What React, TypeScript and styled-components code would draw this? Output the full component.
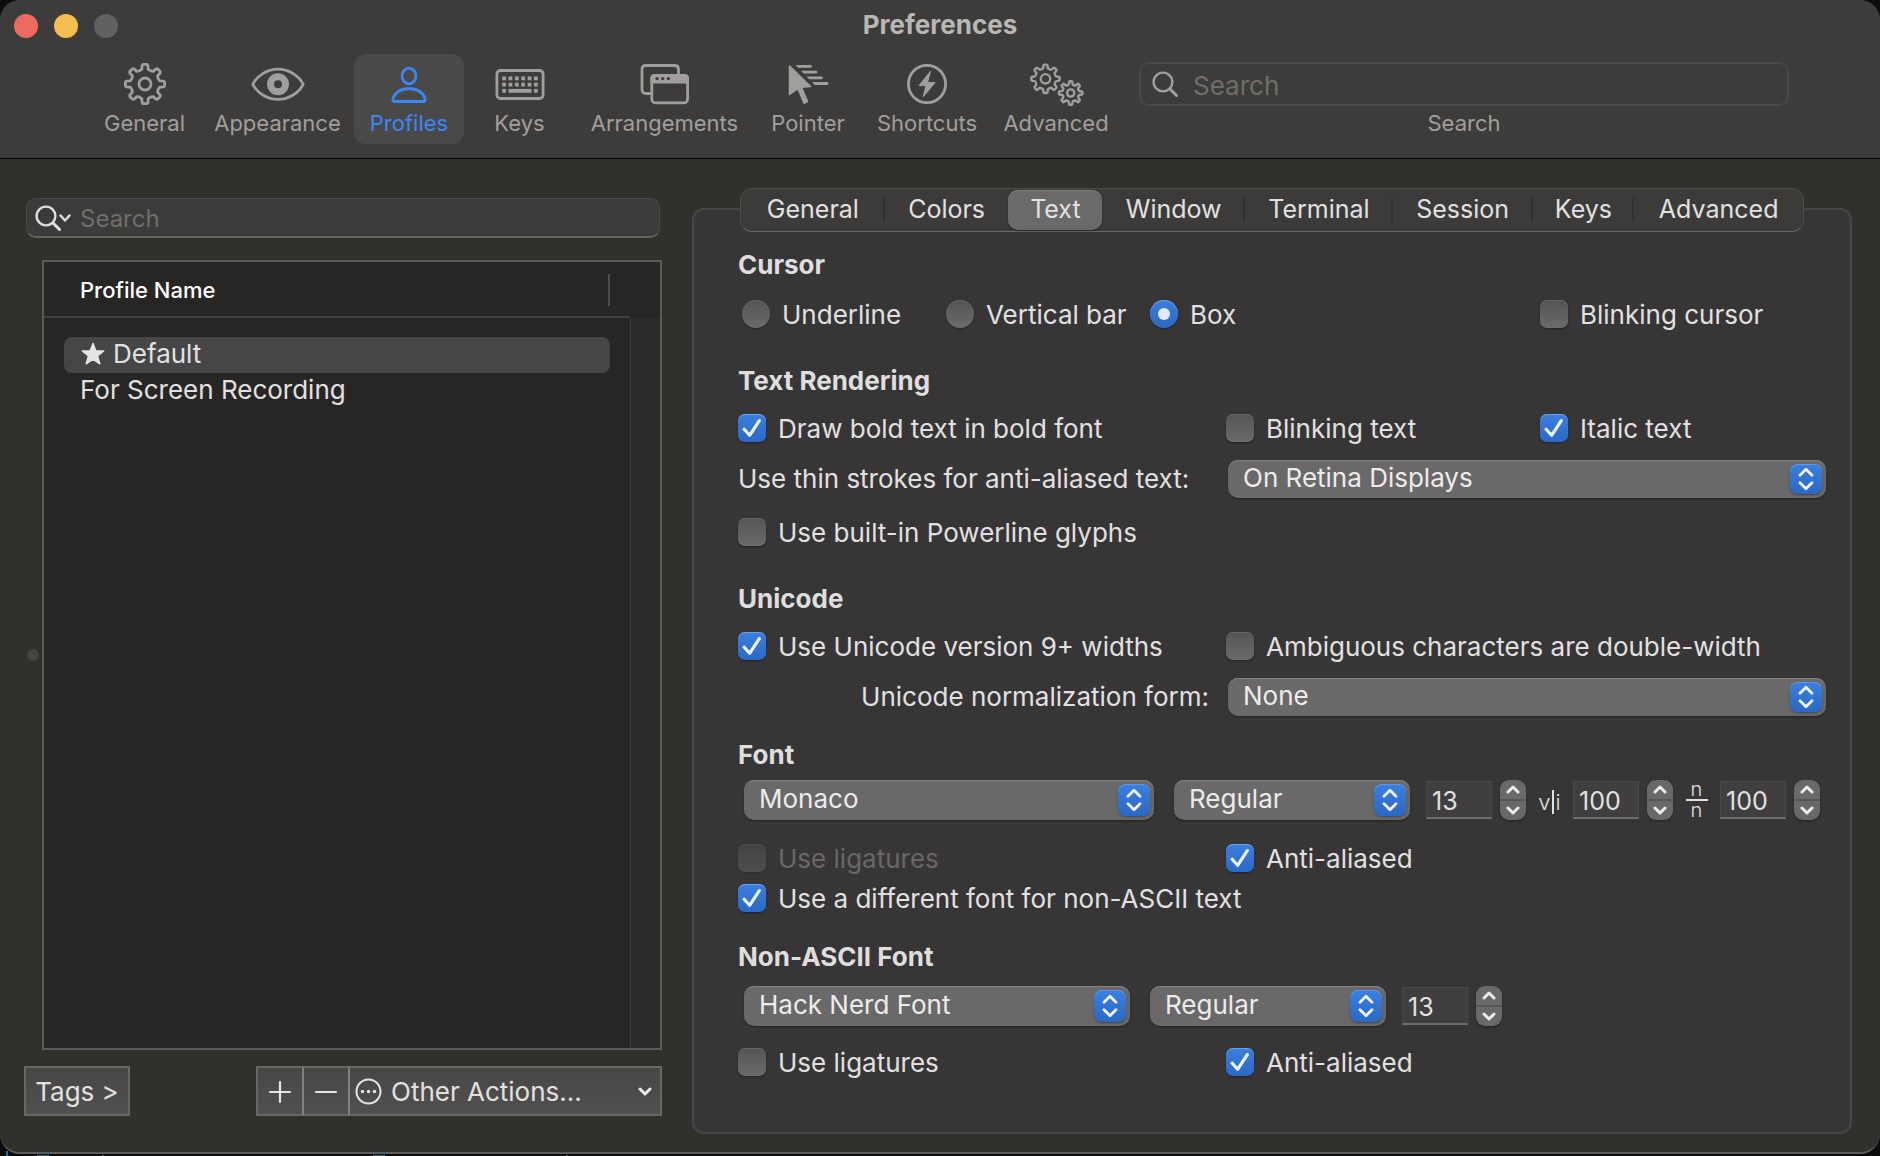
import React, { useState } from 'react';
import styled, { createGlobalStyle, css } from 'styled-components';

const GlobalStyle = createGlobalStyle`
  *, *::before, *::after { box-sizing: border-box; }
  body {
    margin: 0;
    background: #0b0c0e;
    color: #e2e1e1;
    font-family: Inter, "Liberation Sans", sans-serif;
    font-size: 26px;
    line-height: 30px;
  }
  button, input, select { font: inherit; color: inherit; margin: 0; }
  svg { display: block; }
`;

const blueFill = 'linear-gradient(#3a7fe0, #2b69c4)';
const terminalBlue = 'linear-gradient(#2b6a96, #2b6a96)';

const Desktop = styled.div`
  min-height: 100vh;
  padding-bottom: 2px;
  display: flex;
  background:
    ${terminalBlue} 6px 100% / 2px 5px no-repeat,
    ${terminalBlue} 37px 100% / 12px 1px no-repeat,
    ${terminalBlue} 102px 100% / 2px 1px no-repeat,
    ${terminalBlue} 373px 100% / 12px 1px no-repeat,
    ${terminalBlue} 566px 100% / 2px 1px no-repeat;
`;

const Window = styled.div`
  flex: 1;
  display: flex;
  flex-direction: column;
  background: #31302d;
  border-radius: 20px;
  border-bottom: 2px solid #5c5b59;
  overflow: hidden;
`;

const Header = styled.header`
  height: 159px;
  background: #3e3c3a;
  border-bottom: 1px solid #000;
`;

const TitleBar = styled.div`
  position: relative;
  height: 50px;
  display: flex;
  align-items: center;
  justify-content: center;
`;

const WindowButtons = styled.div`
  position: absolute;
  left: 14px;
  top: 14px;
  display: flex;
  gap: 16px;
`;

const WindowButton = styled.button<{ $color: string }>`
  width: 24px;
  height: 24px;
  padding: 0;
  border: 0;
  border-radius: 50%;
  background: ${(p) => p.$color};
`;

const Title = styled.h1`
  margin: 0;
  font-size: 26px;
  line-height: 30px;
  font-weight: 700;
  color: #b9b7b5;
`;

const Toolbar = styled.nav`
  display: grid;
  grid-template-columns: 113px 153px 110px 111px 179px 108px 130px 128px minmax(200px, 1fr);
  padding: 4px 91px 0 88px;
`;

const ToolButton = styled.button<{ $active?: boolean }>`
  height: 90px;
  padding: 8px 0 0;
  border: 0;
  border-radius: 12px;
  background: ${(p) => (p.$active ? '#4b4947' : 'transparent')};
  color: ${(p) => (p.$active ? '#3a88f7' : '#a19f9d')};
  display: flex;
  flex-direction: column;
  align-items: center;
  font-size: 22px;
  line-height: 26px;
  white-space: nowrap;
`;

const ToolSearch = styled.div`
  margin-left: 19px;
  padding-top: 8px;
  display: flex;
  flex-direction: column;
  font-size: 22px;
  line-height: 26px;
  text-align: center;
  color: #a19f9d;
`;

const ToolSearchBox = styled.div`
  height: 44px;
  margin-bottom: 4px;
  padding: 0 11px;
  display: flex;
  align-items: center;
  gap: 14px;
  border: 2px solid #4b4947;
  border-radius: 10px;
  font-size: 26px;
`;

const PlainInput = styled.input`
  flex: 1;
  min-width: 0;
  height: 32px;
  padding: 2px 0 0;
  border: 0;
  outline: 0;
  background: transparent;
  &::placeholder { color: #706e6c; opacity: 1; }
`;

const Body = styled.main`
  flex: 1;
  display: grid;
  grid-template-columns: 660px 1fr;
  column-gap: 32px;
  padding-right: 28px;
`;

const Sidebar = styled.aside`
  padding: 39px 0 36px 24px;
  display: flex;
  flex-direction: column;
`;

const SidebarSearch = styled.div`
  height: 40px;
  margin: 0 0 22px 2px;
  padding: 0 8px;
  display: flex;
  align-items: center;
  gap: 9px;
  border: 1px solid #4a4947;
  border-bottom: 2px solid #666462;
  border-radius: 10px;
  background: #3c3b39;
  font-size: 24px;
`;

const ListArea = styled.div`
  flex: 1;
  margin-right: -2px;
  display: flex;
  align-items: center;
`;

const SplitHandle = styled.div`
  width: 12px;
  height: 12px;
  margin: 0 3px;
  border-radius: 50%;
  background: #454441;
`;

const ListFrame = styled.div`
  flex: 1;
  align-self: stretch;
  display: flex;
  border: 2px solid #595958;
  background: #272624;
`;

const ProfileTable = styled.table`
  flex: 1;
  align-self: flex-start;
  border-collapse: collapse;
  th {
    height: 55px;
    padding: 2px 20px 0 36px;
    border-bottom: 2px solid #424140;
    text-align: left;
    font-size: 22px;
    font-weight: 500;
    color: #fff;
  }
  td { padding: 0 20px; }
  tbody tr:first-child td { padding-top: 19px; }
`;

const HeadCell = styled.div`
  height: 32px;
  display: flex;
  align-items: center;
  justify-content: space-between;
  border-right: 2px solid #4d4c4b;
`;

const ProfileCell = styled.div<{ $selected?: boolean }>`
  height: 36px;
  padding: 0 16px 2px;
  display: flex;
  align-items: center;
  gap: 7px;
  border-radius: 8px;
  background: ${(p) => (p.$selected ? '#464646' : 'transparent')};
`;

const Scroller = styled.div`
  width: 30px;
  margin-top: 56px;
  border-left: 1px solid #3b3b3b;
  background: #2b2b2b;
`;

const SidebarFooter = styled.div`
  margin: 16px -2px 0 0;
  display: flex;
  justify-content: space-between;
`;

const SquareButton = styled.button<{ $width: number }>`
  width: ${(p) => p.$width}px;
  height: 50px;
  padding: 1px 4px 0;
  display: flex;
  align-items: center;
  justify-content: center;
  border: 2px solid #686766;
  background: linear-gradient(#484745, #52504e);
  white-space: nowrap;
`;

const ButtonGroup = styled.div`
  display: flex;
  ${SquareButton} + ${SquareButton} { border-left-color: #83817f; }
  ${SquareButton}:not(:last-child) { border-right: 0; }
  ${SquareButton}:last-child { justify-content: flex-start; gap: 9px; padding: 1px 8px 0 5px; }
  ${SquareButton}:last-child > :last-child { margin-left: auto; }
`;

const Details = styled.section`
  padding: 29px 0 18px;
  display: flex;
  flex-direction: column;
`;

const Tabs = styled.div`
  position: relative;
  height: 44px;
  margin: 0 48px -24px 48px;
  padding: 1px 0;
  display: grid;
  grid-template-columns: 144fr 124fr 94fr 143fr 148fr 140fr 102fr 169fr;
  border: 1px solid #4e4d4b;
  border-bottom-color: #6c6a68;
  border-radius: 12px;
  background: #3c3b39;
  font-size: 25px;
`;

const Tab = styled.button<{ $active?: boolean; $divider?: boolean }>`
  position: relative;
  padding: 0 0 2px;
  border: 0;
  border-radius: 10px;
  background: transparent;
  white-space: nowrap;
  ${(p) => p.$active && css`
    background: #6b6a69;
    box-shadow: 0 1px 2px rgba(0, 0, 0, 0.4), inset 0 1px 0 #7e7d7c;
  `}
  ${(p) => p.$divider && css`
    &::after {
      content: '';
      position: absolute;
      right: 0;
      top: 8px;
      bottom: 8px;
      width: 2px;
      background: #323130;
    }
  `}
`;

const Panel = styled.div`
  flex: 1;
  padding: 40px 24px 20px 44px;
  border: 2px solid #484645;
  border-radius: 12px;
  background: #383536;
`;

const Heading = styled.h2<{ $top?: number }>`
  margin: ${(p) => p.$top ?? 0}px 0 0;
  font-size: 26px;
  line-height: 30px;
  font-weight: 700;
  color: #dfdedf;
`;

const Row = styled.div<{ $top: number }>`
  margin-top: ${(p) => p.$top}px;
  display: grid;
  grid-template-columns: minmax(0, 488fr) minmax(0, 314fr) minmax(0, 286fr);
  align-items: center;
  white-space: nowrap;
`;

const RadioGroup = styled.div`
  grid-column: span 2;
  padding-left: 4px;
  display: grid;
  grid-template-columns: 204px 204px 1fr;
`;

const Wide = styled.div`
  grid-column: span 2;
  padding-left: 2px;
  display: grid;
`;

const FieldLabel = styled.label<{ $right?: boolean }>`
  padding: 0 17px 0 0;
  text-align: ${(p) => (p.$right ? 'right' : 'left')};
`;

const FontRow = styled.div<{ $top: number }>`
  margin-top: ${(p) => p.$top}px;
  padding-left: 6px;
  display: flex;
  align-items: center;
`;

const Option = styled.label<{ $disabled?: boolean }>`
  height: 28px;
  display: flex;
  align-items: center;
  gap: 12px;
  color: ${(p) => (p.$disabled ? '#696768' : 'inherit')};
`;

const OptionText = styled.span`
  padding-top: 2px;
`;

const Mark = styled.span<{ $disabled?: boolean }>`
  display: grid;
  width: 28px;
  height: 28px;
  opacity: ${(p) => (p.$disabled ? 0.45 : 1)};
  > * { grid-area: 1 / 1; place-self: center; }
  > svg { pointer-events: none; }
`;

const Tick = styled.input<{ $round?: boolean }>`
  appearance: none;
  width: 28px;
  height: 28px;
  border-radius: ${(p) => (p.$round ? '50%' : '7px')};
  background: linear-gradient(#555354, #6c6a6b);
  box-shadow: 0 1px 2px rgba(0, 0, 0, 0.4), inset 0 1px 0 rgba(255, 255, 255, 0.12);
  &:checked {
    background: ${blueFill};
    box-shadow: 0 1px 2px rgba(0, 0, 0, 0.4), inset 0 1px 0 #6ba1ec;
  }
`;

const SelectWrap = styled.div<{ $width?: number; $tall?: boolean }>`
  position: relative;
  width: ${(p) => (p.$width ? `${p.$width}px` : 'auto')};
  height: ${(p) => (p.$tall ? 40 : 38)}px;
`;

const NativeSelect = styled.select`
  appearance: none;
  display: block;
  width: 100%;
  height: 100%;
  padding: 0 44px 2px 15px;
  border: 0;
  border-radius: 10px;
  background: #6a6869;
  color: #ececec;
  box-shadow: 0 1px 2px rgba(0, 0, 0, 0.4), inset 0 1px 0 #858384;
`;

const SelectBadge = styled.span`
  position: absolute;
  top: 4px;
  right: 4px;
  bottom: 4px;
  width: 32px;
  display: grid;
  place-items: center;
  border-radius: 8px;
  background: ${blueFill};
  box-shadow: 0 1px 2px rgba(0, 0, 0, 0.35), inset 0 1px 0 #5c98ec;
  pointer-events: none;
`;

const NumberInput = styled.input`
  width: 66px;
  height: 38px;
  padding: 2px 5px 0;
  border: 1px solid #4b4a4b;
  border-bottom: 2px solid #6f6e6f;
  border-radius: 0;
  outline: 0;
  background: #403e3f;
  font-size: 25px;
`;

const Stepper = styled.div`
  width: 26px;
  height: 40px;
  margin-left: 8px;
  display: flex;
  flex-direction: column;
  border-radius: 9px;
  overflow: hidden;
  background: #6a6869;
  box-shadow: 0 1px 2px rgba(0, 0, 0, 0.4);
`;

const StepButton = styled.button`
  flex: 1;
  padding: 0;
  border: 0;
  background: transparent;
  display: grid;
  place-items: center;
  & + & { border-top: 2px solid #575556; }
`;

const Gap = styled.div<{ $size: number }>`
  flex: 0 0 ${(p) => p.$size}px;
`;

const SpacingMark = styled.span`
  width: 47px;
  display: grid;
  place-items: center;
`;

const HorizontalMark = styled.span`
  padding-top: 4px;
  display: flex;
  align-items: center;
  font-size: 22px;
  line-height: 24px;
  font-weight: 300;
  i { width: 2px; height: 24px; margin: 0 2px 0 1px; background: currentColor; }
`;

const VerticalMark = styled.span`
  display: grid;
  justify-items: center;
  font-size: 20px;
  line-height: 19px;
  font-weight: 300;
  i { width: 22px; height: 2px; background: currentColor; }
`;

function gearPath(cx: number, cy: number, outer: number, inner: number, teeth = 8) {
  const pts: string[] = [];
  const step = (Math.PI * 2) / teeth;
  const at = (r: number, a: number) =>
    `${(cx + r * Math.sin(a)).toFixed(2)} ${(cy - r * Math.cos(a)).toFixed(2)}`;
  for (let i = 0; i < teeth; i++) {
    const a = i * step;
    pts.push(`${i ? 'L' : 'M'}${at(inner, a - step * 0.27)}`);
    pts.push(`L${at(outer - 1, a - step * 0.2)}`);
    pts.push(`Q${at(outer, a - step * 0.18)} ${at(outer, a - step * 0.1)}`);
    pts.push(`L${at(outer, a + step * 0.1)}`);
    pts.push(`Q${at(outer, a + step * 0.18)} ${at(outer - 1, a + step * 0.2)}`);
    pts.push(`L${at(inner, a + step * 0.27)}`);
    pts.push(`Q${at(inner - 1.4, a + step * 0.5)} ${at(inner, a + step * 0.73)}`);
  }
  return pts.join('') + 'Z';
}

const iconProps = {
  height: 48,
  fill: 'none',
  stroke: 'currentColor',
  strokeWidth: 2.8,
  strokeLinejoin: 'round' as const,
  strokeLinecap: 'round' as const,
  'aria-hidden': true,
};

const GearIcon = () => (
  <svg {...iconProps} width="44" viewBox="0 0 44 48">
    <path d={gearPath(22, 22, 19.7, 15)} />
    <circle cx="22" cy="22" r="6" />
  </svg>
);

const EyeIcon = () => (
  <svg {...iconProps} width="56" viewBox="0 0 56 48">
    <path d="M2.8 22.3C7 14 17 7.2 28 7.2S49 14 53.2 22.3C49 30.6 39 37.4 28 37.4S7 30.6 2.8 22.3Z" />
    <circle cx="28" cy="22.3" r="7.5" strokeWidth="7" />
  </svg>
);

const PersonIcon = () => (
  <svg {...iconProps} width="40" viewBox="0 0 40 48">
    <ellipse cx="20" cy="14" rx="7" ry="7.8" />
    <path d="M5.5 39.5C3.9 39.5 3.6 38.5 4 36.5C5.6 30.5 12 26.5 20 26.5S34.4 30.5 36 36.5C36.4 38.5 36.1 39.5 34.5 39.5Z" />
  </svg>
);

const KeyboardIcon = () => (
  <svg {...iconProps} width="50" viewBox="0 0 50 48">
    <rect x="1.9" y="8.5" width="46.2" height="28" rx="3.5" />
    <g fill="currentColor" stroke="none">
      {[0, 1].map((r) =>
        [0, 1, 2, 3, 4, 5].map((c) => (
          <rect key={`${r}${c}`} x={7.2 + c * 6.35} y={14.5 + r * 6.2} width="3.8" height="3.8" />
        )),
      )}
      <rect x="7.2" y="26.9" width="3.8" height="3.8" />
      <rect x="13.5" y="26.9" width="23" height="3.8" />
      <rect x="38.95" y="26.9" width="3.8" height="3.8" />
    </g>
  </svg>
);

const WindowsIcon = () => (
  <svg {...iconProps} width="50" viewBox="0 0 50 48">
    <path d="M10 31.500H6C3.500 31.500 2 30 2 27.500V7.500C2 5 3.500 3.500 6 3.500H34.500C37 3.500 38.500 5 38.500 7.500V12" />
    <rect x="11.8" y="13.3" width="35.8" height="27.6" rx="4" />
    <path d="M11.8 20V16C11.8 14 13 13.3 15 13.3H44.4C46.4 13.3 47.6 14 47.6 16V20Z" fill="currentColor" />
    <g fill="#3e3c3a" stroke="none">
      <circle cx="17" cy="16.6" r="1.7" />
      <circle cx="22.7" cy="16.6" r="1.7" />
      <circle cx="28.4" cy="16.6" r="1.7" />
    </g>
  </svg>
);

const PointerIcon = () => (
  <svg {...iconProps} width="42" viewBox="0 0 42 48">
    <path d="M2.5 4L23.5 24.5L14.5 25.2L20.6 39.6L17 41.2L11 26.7L2.5 32.5Z" fill="currentColor" strokeWidth="1.5" />
    <g fill="currentColor" stroke="none">
      <path d="M8.5 3H23.5A1.4 1.4 0 0 1 23.5 5.8H11.3Z" />
      <path d="M14 8.700H29A1.4 1.4 0 0 1 29 11.5H16.8Z" />
      <path d="M19.5 14.4H34.5A1.4 1.4 0 0 1 34.5 17.2H22.3Z" />
      <path d="M25 20.1H40A1.4 1.4 0 0 1 40 22.9H27.8Z" />
    </g>
  </svg>
);

const BoltIcon = () => (
  <svg {...iconProps} width="44" viewBox="0 0 44 48">
    <circle cx="22" cy="22" r="18.6" />
    <path d="M25.3 9.500L14 23.6H21L18.2 34.8L30 20.6H22.8Z" fill="currentColor" strokeWidth="1" />
  </svg>
);

const GearsIcon = () => (
  <svg {...iconProps} width="56" viewBox="0 0 56 48" strokeWidth={2.4}>
    <path d={gearPath(17.5, 16.8, 14.2, 11)} />
    <circle cx="17.5" cy="16.8" r="4.7" />
    <path d={gearPath(42.7, 31, 11.8, 9)} />
    <circle cx="42.7" cy="31" r="3.6" />
  </svg>
);

const SearchIcon = ({ menu }: { menu?: boolean }) => (
  <svg width={menu ? 36 : 27} height="28" viewBox={menu ? '0 0 36 28' : '0 0 27 28'} fill="none" stroke={menu ? '#dededd' : '#a19f9d'} strokeWidth="2.4" strokeLinecap="round" strokeLinejoin="round" aria-hidden>
    <circle cx="11" cy="12" r="9.4" />
    <path d="M18 19L24.5 25.5" strokeWidth="3" />
    {menu && <path d="M25.5 11.5L30 16.5L34.5 11.5" />}
  </svg>
);

const StarIcon = () => (
  <svg width="26" height="26" viewBox="0 0 26 26" fill="#e4e4e4" stroke="#e4e4e4" strokeWidth="1.5" strokeLinejoin="round" aria-hidden>
    <path d="M13 2.5L15.9 10H23.7L17.5 14.9L19.8 22.8L13 18.2L6.2 22.8L8.5 14.9L2.3 10H10.1Z" />
  </svg>
);

const PlusIcon = ({ minus }: { minus?: boolean }) => (
  <svg width="24" height="24" viewBox="0 0 24 24" stroke="#e4e4e4" strokeWidth="2.2" strokeLinecap="round" aria-hidden>
    <path d={minus ? 'M2 12H22' : 'M2 12H22M12 2V22'} />
  </svg>
);

const MoreIcon = () => (
  <svg width="27" height="27" viewBox="0 0 27 27" fill="none" stroke="#e4e4e4" strokeWidth="2" aria-hidden>
    <circle cx="13.5" cy="13.5" r="12" />
    <g fill="#e4e4e4" stroke="none">
      <circle cx="7.5" cy="13.5" r="1.7" />
      <circle cx="13.5" cy="13.5" r="1.7" />
      <circle cx="19.5" cy="13.5" r="1.7" />
    </g>
  </svg>
);

const Chevron = ({ up }: { up?: boolean }) => (
  <svg width="14" height="9" viewBox="0 0 14 9" fill="none" stroke="#ececec" strokeWidth="3" strokeLinecap="round" strokeLinejoin="round" aria-hidden>
    <path d={up ? 'M2 7L7 2L12 7' : 'M2 2L7 7L12 2'} />
  </svg>
);

const UpDown = () => (
  <svg width="18" height="24" viewBox="0 0 18 24" fill="none" stroke="#f0f4fb" strokeWidth="2.8" strokeLinecap="round" strokeLinejoin="round" aria-hidden>
    <path d="M3 8.300L9 2.300L15 8.300M3 15.700L9 21.700L15 15.700" />
  </svg>
);

function Check({ label, on, disabled }: { label: string; on?: boolean; disabled?: boolean }) {
  const [checked, setChecked] = useState(!!on);
  return (
    <Option $disabled={disabled}>
      <Mark $disabled={disabled}>
        <Tick type="checkbox" checked={checked} disabled={disabled} onChange={(e) => setChecked(e.target.checked)} />
        {checked && (
          <svg width="20" height="20" viewBox="0 0 20 20" fill="none" stroke="#eef3fc" strokeWidth="3.2" strokeLinecap="round" strokeLinejoin="round" aria-hidden>
            <path d="M2.2 11.2L7.6 17.3L17.3 2.6" />
          </svg>
        )}
      </Mark>
      <OptionText>{label}</OptionText>
    </Option>
  );
}

function Radio({ label, checked, onSelect }: { label: string; checked: boolean; onSelect: () => void }) {
  return (
    <Option>
      <Mark>
        <Tick $round type="radio" name="cursor" checked={checked} onChange={onSelect} />
        {checked && (
          <svg width="12" height="12" viewBox="0 0 12 12" aria-hidden>
            <circle cx="6" cy="6" r="6" fill="#e3ebf8" />
          </svg>
        )}
      </Mark>
      <OptionText>{label}</OptionText>
    </Option>
  );
}

function Select({ id, name, options, width, tall }: { id?: string; name?: string; options: string[]; width?: number; tall?: boolean }) {
  return (
    <SelectWrap $width={width} $tall={tall}>
      <NativeSelect id={id} aria-label={name} defaultValue={options[0]}>
        {options.map((o) => (
          <option key={o}>{o}</option>
        ))}
      </NativeSelect>
      <SelectBadge>
        <UpDown />
      </SelectBadge>
    </SelectWrap>
  );
}

function NumberField({ name, initial }: { name: string; initial: number }) {
  const [value, setValue] = useState(initial);
  return (
    <>
      <NumberInput aria-label={name} value={value} onChange={(e) => setValue(Number(e.target.value) || 0)} />
      <Stepper>
        <StepButton aria-label={`Increase ${name}`} onClick={() => setValue(value + 1)}>
          <Chevron up />
        </StepButton>
        <StepButton aria-label={`Decrease ${name}`} onClick={() => setValue(value - 1)}>
          <Chevron />
        </StepButton>
      </Stepper>
    </>
  );
}

const tools = [
  { label: 'General', Icon: GearIcon },
  { label: 'Appearance', Icon: EyeIcon },
  { label: 'Profiles', Icon: PersonIcon },
  { label: 'Keys', Icon: KeyboardIcon },
  { label: 'Arrangements', Icon: WindowsIcon },
  { label: 'Pointer', Icon: PointerIcon },
  { label: 'Shortcuts', Icon: BoltIcon },
  { label: 'Advanced', Icon: GearsIcon },
];

const tabs = ['General', 'Colors', 'Text', 'Window', 'Terminal', 'Session', 'Keys', 'Advanced'];
const cursors = ['Underline', 'Vertical bar', 'Box'];

export default function App() {
  const [tool, setTool] = useState('Profiles');
  const [tab, setTab] = useState('Text');
  const [cursor, setCursor] = useState('Box');
  const activeTab = tabs.indexOf(tab);

  return (
    <>
      <GlobalStyle />
      <Desktop>
        <Window>
          <Header>
            <TitleBar>
              <WindowButtons>
                <WindowButton $color="#ed6a5f" aria-label="Close" />
                <WindowButton $color="#f5bd4f" aria-label="Minimize" />
                <WindowButton $color="#62615f" aria-label="Zoom" />
              </WindowButtons>
              <Title>Preferences</Title>
            </TitleBar>
            <Toolbar>
              {tools.map(({ label, Icon }) => (
                <ToolButton key={label} $active={label === tool} onClick={() => setTool(label)}>
                  <Icon />
                  {label}
                </ToolButton>
              ))}
              <ToolSearch>
                <ToolSearchBox>
                  <SearchIcon />
                  <PlainInput id="tool-search" placeholder="Search" />
                </ToolSearchBox>
                <label htmlFor="tool-search">Search</label>
              </ToolSearch>
            </Toolbar>
          </Header>

          <Body>
            <Sidebar>
              <SidebarSearch>
                <SearchIcon menu />
                <PlainInput aria-label="Search profiles" placeholder="Search" />
              </SidebarSearch>
              <ListArea>
                <SplitHandle />
                <ListFrame>
                  <ProfileTable>
                    <thead>
                      <tr>
                        <th>
                          <HeadCell>Profile Name</HeadCell>
                        </th>
                      </tr>
                    </thead>
                    <tbody>
                      <tr>
                        <td>
                          <ProfileCell $selected>
                            <StarIcon />
                            Default
                          </ProfileCell>
                        </td>
                      </tr>
                      <tr>
                        <td>
                          <ProfileCell>For Screen Recording</ProfileCell>
                        </td>
                      </tr>
                    </tbody>
                  </ProfileTable>
                  <Scroller />
                </ListFrame>
              </ListArea>
              <SidebarFooter>
                <SquareButton $width={106}>Tags &gt;</SquareButton>
                <ButtonGroup>
                  <SquareButton $width={46} aria-label="Add profile">
                    <PlusIcon />
                  </SquareButton>
                  <SquareButton $width={46} aria-label="Remove profile">
                    <PlusIcon minus />
                  </SquareButton>
                  <SquareButton $width={314}>
                    <MoreIcon />
                    Other Actions...
                    <Chevron />
                  </SquareButton>
                </ButtonGroup>
              </SidebarFooter>
            </Sidebar>

            <Details>
              <Tabs role="tablist">
                {tabs.map((t, i) => (
                  <Tab
                    key={t}
                    role="tab"
                    aria-selected={t === tab}
                    $active={t === tab}
                    $divider={i !== activeTab && i + 1 !== activeTab && i < tabs.length - 1}
                    onClick={() => setTab(t)}
                  >
                    {t}
                  </Tab>
                ))}
              </Tabs>
              <Panel>
                <Heading>Cursor</Heading>
                <Row $top={20}>
                  <RadioGroup>
                    {cursors.map((c) => (
                      <Radio key={c} label={c} checked={c === cursor} onSelect={() => setCursor(c)} />
                    ))}
                  </RadioGroup>
                  <Check label="Blinking cursor" />
                </Row>

                <Heading $top={38}>Text Rendering</Heading>
                <Row $top={18}>
                  <Check label="Draw bold text in bold font" on />
                  <Check label="Blinking text" />
                  <Check label="Italic text" on />
                </Row>
                <Row $top={18}>
                  <FieldLabel htmlFor="thin-strokes">Use thin strokes for anti-aliased text:</FieldLabel>
                  <Wide>
                    <Select id="thin-strokes" options={['On Retina Displays', 'Always', 'Never']} />
                  </Wide>
                </Row>
                <Row $top={20}>
                  <Check label="Use built-in Powerline glyphs" />
                </Row>

                <Heading $top={38}>Unicode</Heading>
                <Row $top={18}>
                  <Check label="Use Unicode version 9+ widths" on />
                  <Check label="Ambiguous characters are double-width" />
                </Row>
                <Row $top={18}>
                  <FieldLabel $right htmlFor="normalization">Unicode normalization form:</FieldLabel>
                  <Wide>
                    <Select id="normalization" options={['None', 'NFC', 'NFD']} />
                  </Wide>
                </Row>

                <Heading $top={24}>Font</Heading>
                <FontRow $top={10}>
                  <Select name="Font" options={['Monaco', 'Menlo']} width={410} tall />
                  <Gap $size={20} />
                  <Select name="Style" options={['Regular', 'Bold']} width={236} tall />
                  <Gap $size={16} />
                  <NumberField name="Font size" initial={13} />
                  <SpacingMark>
                    <HorizontalMark>v<i />i</HorizontalMark>
                  </SpacingMark>
                  <NumberField name="Horizontal spacing" initial={100} />
                  <SpacingMark>
                    <VerticalMark><span>n</span><i /><span>n</span></VerticalMark>
                  </SpacingMark>
                  <NumberField name="Vertical spacing" initial={100} />
                </FontRow>
                <Row $top={24}>
                  <Check label="Use ligatures" disabled />
                  <Check label="Anti-aliased" on />
                </Row>
                <Row $top={12}>
                  <Check label="Use a different font for non-ASCII text" on />
                </Row>

                <Heading $top={30}>Non-ASCII Font</Heading>
                <FontRow $top={14}>
                  <Select name="Non-ASCII font" options={['Hack Nerd Font', 'Menlo']} width={386} tall />
                  <Gap $size={20} />
                  <Select name="Non-ASCII style" options={['Regular', 'Bold']} width={236} tall />
                  <Gap $size={16} />
                  <NumberField name="Non-ASCII font size" initial={13} />
                </FontRow>
                <Row $top={22}>
                  <Check label="Use ligatures" />
                  <Check label="Anti-aliased" on />
                </Row>
              </Panel>
            </Details>
          </Body>
        </Window>
      </Desktop>
    </>
  );
}
